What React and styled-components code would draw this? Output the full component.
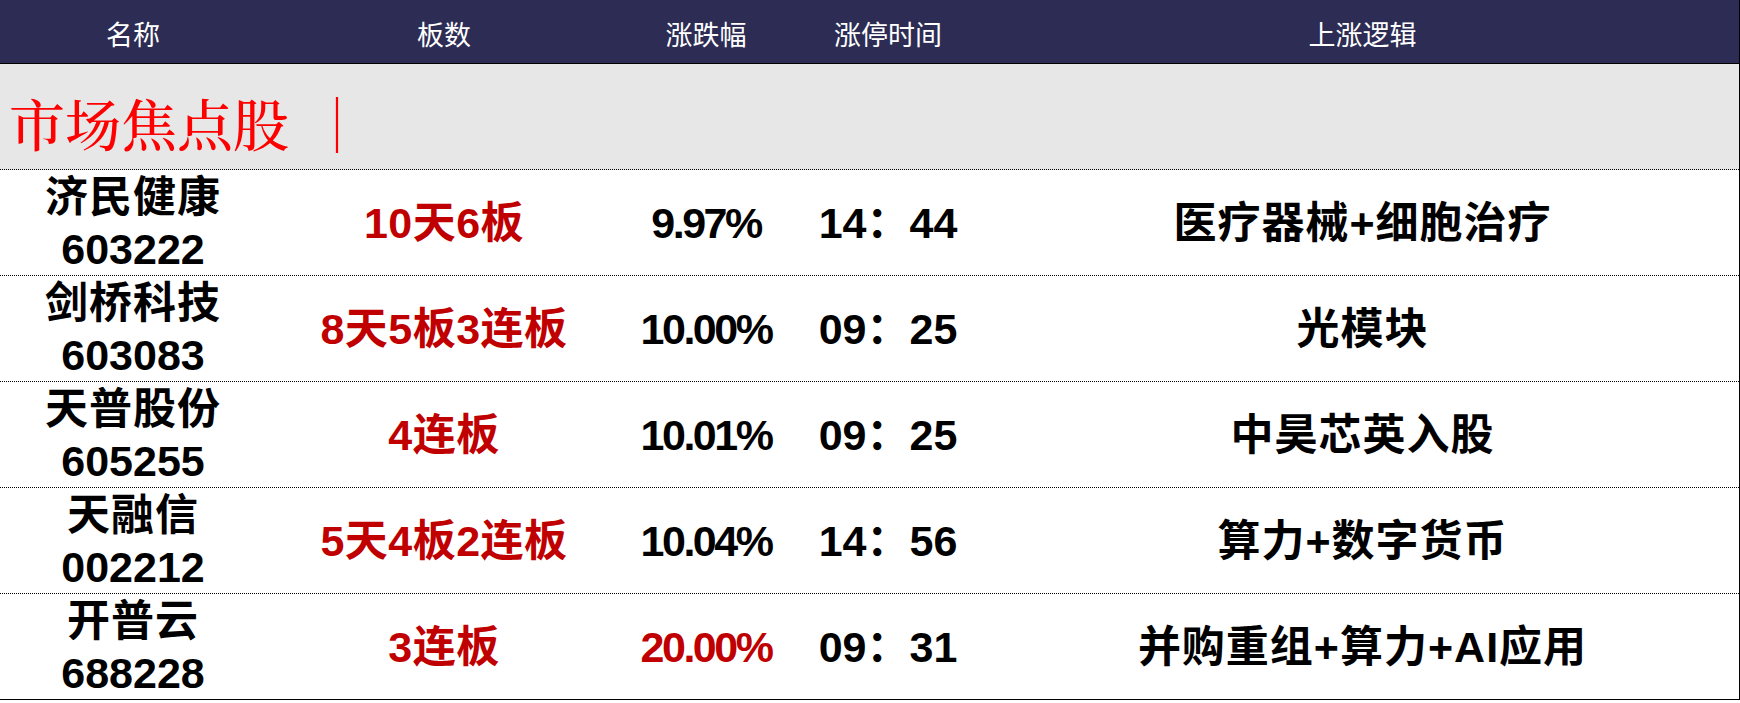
import React from 'react';
import styled, { createGlobalStyle } from 'styled-components';

const GlobalStyle = createGlobalStyle`
  body {
    margin: 0;
    background: #fff;
  }
`;

const COLS = '266px 356px 168px 196px 1fr';
const FONT = `"Liberation Sans", "Noto Sans CJK SC", Arial, sans-serif`;

const Table = styled.div`
  width: 1739px;
  border-right: 1px solid #000;
  font-family: ${FONT};
`;

const HeaderRow = styled.div`
  display: grid;
  grid-template-columns: ${COLS};
  height: 63px;
  background-color: #2c2c54;
  border-bottom: 1px solid #000;
`;

const HeadCell = styled.div`
  display: flex;
  align-items: center;
  justify-content: center;
  color: #fff;
  font-size: 27px;
  padding-top: 3px;
`;

const SectionRow = styled.div`
  display: flex;
  align-items: center;
  height: 105px;
  background-color: #e7e7e7;
  border-bottom: 1px dotted #000;
  padding-left: 9px;
`;

const SectionTitle = styled.div`
  color: #ff0000;
  font-family: "Noto Serif CJK SC", "Noto Sans CJK SC", serif;
  font-size: 56px;
  font-weight: 500;
  padding-top: 10px;
`;

const Bar = styled.span`
  margin-left: 20px;
`;

const DataRow = styled.div`
  display: grid;
  grid-template-columns: ${COLS};
  height: 105px;
  border-bottom: 1px ${(p) => (p.$last ? 'solid' : 'dotted')} #000;
`;

const Cell = styled.div`
  display: flex;
  flex-direction: column;
  align-items: center;
  justify-content: center;
  font-size: 43px;
  font-weight: bold;
  line-height: 52px;
  color: ${(p) => (p.$red ? '#c00000' : '#000')};
  letter-spacing: ${(p) => p.$ls || '0px'};
  white-space: nowrap;
`;

const Code = styled.div`
  letter-spacing: 0;
`;

const stocks = [
  { name: '济民健康', code: '603222', plate: '10天6板', pct: '9.97%', time: '14：44', logic: '医疗器械+细胞治疗' },
  { name: '剑桥科技', code: '603083', plate: '8天5板3连板', pct: '10.00%', time: '09：25', logic: '光模块' },
  { name: '天普股份', code: '605255', plate: '4连板', pct: '10.01%', time: '09：25', logic: '中昊芯英入股' },
  { name: '天融信', code: '002212', plate: '5天4板2连板', pct: '10.04%', time: '14：56', logic: '算力+数字货币' },
  { name: '开普云', code: '688228', plate: '3连板', pct: '20.00%', time: '09：31', logic: '并购重组+算力+AI应用', pctRed: true },
];

const App = () => {
  return (
    <>
      <GlobalStyle />
      <Table>
        <HeaderRow>
          <HeadCell>名称</HeadCell>
          <HeadCell>板数</HeadCell>
          <HeadCell>涨跌幅</HeadCell>
          <HeadCell>涨停时间</HeadCell>
          <HeadCell>上涨逻辑</HeadCell>
        </HeaderRow>
        <SectionRow>
          <SectionTitle>
            市场焦点股<Bar>｜</Bar>
          </SectionTitle>
        </SectionRow>
        {stocks.map((s, i) => (
          <DataRow key={s.code} $last={i === stocks.length - 1}>
            <Cell $ls="1px">
              <div>{s.name}</div>
              <Code>{s.code}</Code>
            </Cell>
            <Cell $red $ls="0.5px">{s.plate}</Cell>
            <Cell $red={s.pctRed} $ls="-2.5px">{s.pct}</Cell>
            <Cell>{s.time}</Cell>
            <Cell $ls="1px">{s.logic}</Cell>
          </DataRow>
        ))}
      </Table>
    </>
  );
};

export default App;
